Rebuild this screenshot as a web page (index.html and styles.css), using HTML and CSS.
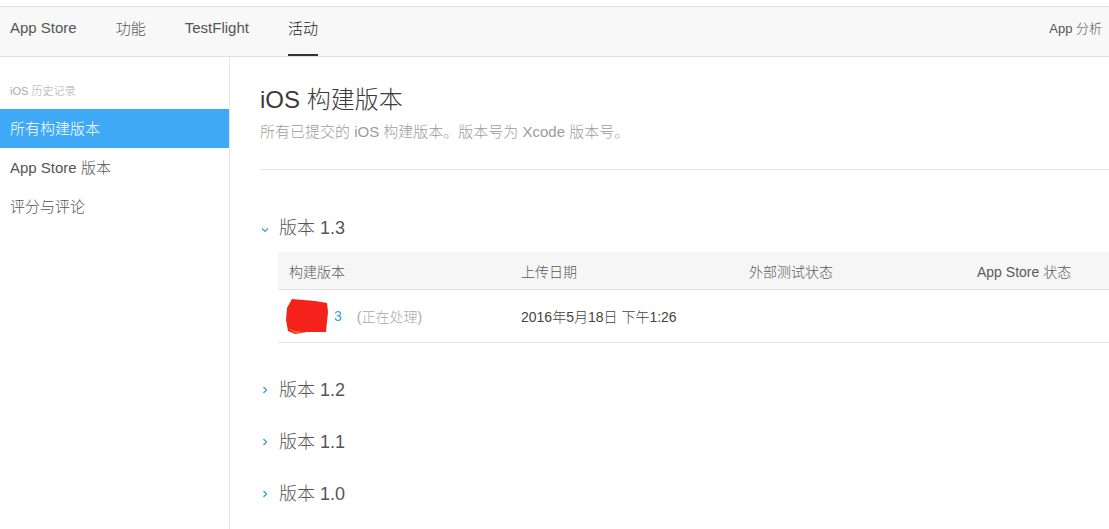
FILE: index.html
```html
<!DOCTYPE html>
<html lang="zh-CN">
<head>
  <meta charset="UTF-8" />
  <meta name="viewport" content="width=device-width, initial-scale=1.0" />
  <title>iOS 构建版本</title>
  <link rel="stylesheet" href="styles.css">
</head>
<body>

  <header class="topbar">
    <nav class="tabs">
      <a class="tab">App Store</a>
      <a class="tab">功能</a>
      <a class="tab">TestFlight</a>
      <a class="tab tab-active">活动</a>
    </nav>
    <a class="tab-right">App 分析</a>
  </header>

  <div class="layout">
    <aside class="sidebar">
      <div class="side-label">iOS 历史记录</div>
      <a class="side-item side-active">所有构建版本</a>
      <a class="side-item">App Store 版本</a>
      <a class="side-item">评分与评论</a>
    </aside>

    <main class="content">
      <h1 class="page-title">iOS 构建版本</h1>
      <p class="page-sub">所有已提交的 iOS 构建版本。版本号为 Xcode 版本号。</p>

      <section class="version version-open">
        <div class="version-head">
          <svg class="chev" width="8" height="8" viewBox="0 0 8 8"><path d="M1 2.5 L4 5.5 L7 2.5" fill="none" stroke="#2f9be6" stroke-width="1.2"/></svg>
          <span>版本 1.3</span>
        </div>
        <div class="builds">
          <div class="builds-row builds-header">
            <div class="cell">构建版本</div>
            <div class="cell">上传日期</div>
            <div class="cell">外部测试状态</div>
            <div class="cell">App Store 状态</div>
          </div>
          <div class="builds-row">
            <div class="cell">
              <svg class="blob" width="44" height="37" viewBox="0 0 44 37">
                <path d="M7 1 L30 3 L42 5 L43 14 L41 34 L22 34 L10 36 L3 33 L1 22 L2 10 Z" fill="#f5221b"/>
                <path d="M3 30 L10 35 L20 34 L10 33 Z" fill="#f08a3a" opacity="0.7"/>
              </svg>
              <span class="build-num">3</span>
              <span class="build-state">(正在处理)</span>
            </div>
            <div class="cell">2016年5月18日 下午1:26</div>
            <div class="cell"></div>
            <div class="cell"></div>
          </div>
        </div>
      </section>

      <section class="version">
        <div class="version-head">
          <svg class="chev" width="8" height="8" viewBox="0 0 8 8"><path d="M2.5 1 L5.5 4 L2.5 7" fill="none" stroke="#2f9be6" stroke-width="1.2"/></svg>
          <span>版本 1.2</span>
        </div>
      </section>

      <section class="version">
        <div class="version-head">
          <svg class="chev" width="8" height="8" viewBox="0 0 8 8"><path d="M2.5 1 L5.5 4 L2.5 7" fill="none" stroke="#2f9be6" stroke-width="1.2"/></svg>
          <span>版本 1.1</span>
        </div>
      </section>

      <section class="version">
        <div class="version-head">
          <svg class="chev" width="8" height="8" viewBox="0 0 8 8"><path d="M2.5 1 L5.5 4 L2.5 7" fill="none" stroke="#2f9be6" stroke-width="1.2"/></svg>
          <span>版本 1.0</span>
        </div>
      </section>
    </main>
  </div>

</body>
</html>
```

FILE: styles.css
```css
* {
  margin: 0;
  padding: 0;
  box-sizing: border-box;
}

body {
  font-family: 'Liberation Sans', 'Noto Sans CJK SC', sans-serif;
  font-weight: 300;
  background: #fff;
  color: #444;
  padding-top: 6px;
  height: 100vh;
  overflow: hidden;
}

a {
  color: inherit;
  text-decoration: none;
}

/* top tabs */
.topbar {
  display: flex;
  justify-content: space-between;
  align-items: stretch;
  height: 51px;
  background: #f8f8f8;
  border-top: 1px solid #e0e0e0;
  border-bottom: 1px solid #dedede;
  padding: 0 7px 0 10px;
}

.tabs {
  display: flex;
  gap: 39px;
}

.tab {
  display: flex;
  align-items: center;
  font-size: 15px;
  color: #555;
  border-bottom: 2px solid transparent;
  padding-bottom: 6px;
}

.tab-active {
  color: #222;
  border-bottom-color: #333;
}

.tab-right {
  display: flex;
  align-items: center;
  font-size: 13px;
  color: #555;
  padding-bottom: 8px;
}

/* layout */
.layout {
  display: flex;
  height: calc(100% - 51px);
}

.sidebar {
  width: 230px;
  flex-shrink: 0;
  border-right: 1px solid #e6e6e6;
  padding-top: 26px;
}

.side-label {
  font-size: 11px;
  color: #aaa;
  line-height: 16px;
  padding: 0 10px 10px;
}

.side-item {
  display: block;
  font-size: 15px;
  line-height: 39px;
  padding: 0 10px;
  color: #555;
}

.side-active {
  background: #3fa9f5;
  color: #fff;
}

.content {
  flex: 1;
  padding: 28px 0 0 30px;
}

.page-title {
  font-size: 24px;
  font-weight: 300;
  line-height: 30px;
  color: #3a3a3a;
}

.page-sub {
  font-size: 15px;
  line-height: 20px;
  color: #9c9c9c;
  margin-top: 7px;
  padding-bottom: 27px;
  border-bottom: 1px solid #e3e3e3;
}

/* version groups */
.version {
  padding: 14px 0;
}

.version-open {
  margin-top: 31px;
  padding-bottom: 20px;
}

.version-head {
  display: flex;
  align-items: center;
  font-size: 18px;
  line-height: 24px;
  color: #555;
  padding-top: 1px;
  margin-bottom: -1px;
}

.chev {
  width: 8px;
  margin: 0 10px 0 1px;
  flex-shrink: 0;
}

.version-open .chev {
  margin-top: 3px;
}

.builds {
  margin: 13px 0 0 18px;
}

.builds-row {
  display: grid;
  grid-template-columns: 232px 228px 228px 1fr;
  height: 53px;
  border-bottom: 1px solid #e3e3e3;
  font-size: 14px;
}

.builds-header {
  height: 38px;
  background: #f6f6f6;
}

.cell {
  display: flex;
  align-items: center;
  padding: 0 11px;
  white-space: nowrap;
  color: #444;
}

.builds-header .cell {
  color: #5a5a5a;
}

.blob {
  margin-left: -4px;
}

.build-num {
  color: #3a9ee6;
  margin-left: 5px;
}

.build-state {
  color: #aaa;
  margin-left: 15px;
}
```
